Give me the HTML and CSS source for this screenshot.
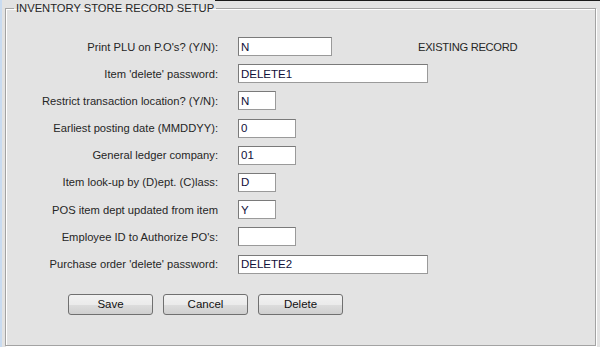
FILE: index.html
```html
<!DOCTYPE html>
<html lang="en">
<head>
  <meta charset="UTF-8" />
  <title>Inventory Store Record Setup</title>
  <link rel="stylesheet" href="styles.css">
</head>
<body>

  <div class="page">
    <fieldset class="setup">
      <legend>INVENTORY STORE RECORD SETUP</legend>

      <div class="rows">
        <div class="row">
          <label for="printPlu">Print PLU on P.O's? (Y/N):</label>
          <input type="text" id="printPlu" class="w94" value="N" />
          <span class="status">EXISTING RECORD</span>
        </div>
        <div class="row">
          <label for="itemPwd">Item 'delete' password:</label>
          <input type="text" id="itemPwd" class="w190" value="DELETE1" />
        </div>
        <div class="row">
          <label for="restrictLoc">Restrict transaction location? (Y/N):</label>
          <input type="text" id="restrictLoc" class="w38" value="N" />
        </div>
        <div class="row">
          <label for="postDate">Earliest posting date (MMDDYY):</label>
          <input type="text" id="postDate" class="w58" value="0" />
        </div>
        <div class="row">
          <label for="glCompany">General ledger company:</label>
          <input type="text" id="glCompany" class="w58" value="01" />
        </div>
        <div class="row">
          <label for="lookup">Item look-up by (D)ept. (C)lass:</label>
          <input type="text" id="lookup" class="w38" value="D" />
        </div>
        <div class="row">
          <label for="posDept">POS item dept updated from item</label>
          <input type="text" id="posDept" class="w38" value="Y" />
        </div>
        <div class="row">
          <label for="empId">Employee ID to Authorize PO's:</label>
          <input type="text" id="empId" class="w58" value="" />
        </div>
        <div class="row">
          <label for="poPwd">Purchase order 'delete' password:</label>
          <input type="text" id="poPwd" class="w190" value="DELETE2" />
        </div>
      </div>

      <div class="buttons">
        <button type="button">Save</button>
        <button type="button">Cancel</button>
        <button type="button">Delete</button>
      </div>
    </fieldset>
  </div>

</body>
</html>
```

FILE: styles.css
```css
html, body {
  height: 100%;
}

body {
  margin: 0;
  background: #e3e3e3;
  font-family: "Liberation Sans", Arial, sans-serif;
  font-size: 11.2px;
  color: #262626;
  border-left: 2px solid #c9dbf0;
  box-sizing: border-box;
}

.page {
  position: relative;
  padding: 1px 3px 0 3px;
}

/* dark window edge along the top right */
.page::before {
  content: "";
  position: absolute;
  top: 0;
  left: 213px;
  right: 0;
  height: 1px;
  background: #1a1a1a;
}

.setup {
  margin: 0;
  padding: 0 0 28px 0;
  height: 345px;
  box-sizing: border-box;
  border: 1px solid #a3a3a3;
  box-shadow: inset 1px 1px 0 #fff, 1px 1px 0 #fff;
  min-width: 0;
  width: 591px;
}

.setup legend {
  margin-left: 8px;
  padding: 0 2px;
  color: #262626;
  font-size: 11.2px;
  line-height: 14px;
}

.rows {
  display: flex;
  flex-direction: column;
  gap: 8.2px;
  padding-top: 22px;
}

.row {
  display: flex;
  align-items: center;
  gap: 20px;
  height: 19px;
}

.row label {
  width: 212px;
  text-align: right;
  white-space: nowrap;
}

.row input {
  height: 19px;
  box-sizing: border-box;
  margin: 0;
  padding: 0 2px;
  border: 1px solid #7a7a7a;
  border-right-color: #9a9a9a;
  border-bottom-color: #9a9a9a;
  background: #fff;
  font-family: "Liberation Sans", Arial, sans-serif;
  font-size: 11.5px;
  color: #10103a;
  outline: none;
}

.w38 { width: 38px; }
.w58 { width: 58px; }
.w94 { width: 94px; }
.w190 { width: 190px; }

.status {
  margin-left: 66px;
  color: #262626;
  letter-spacing: -0.3px;
}

.buttons {
  display: flex;
  gap: 10px;
  padding: 20px 0 0 62px;
}

.buttons button {
  width: 85px;
  height: 21px;
  margin: 0;
  padding: 0;
  border: 1px solid #707070;
  border-radius: 3px;
  background: linear-gradient(#f2f2f2, #ebebeb 50%, #dddddd 51%, #cfcfcf);
  font-family: "Liberation Sans", Arial, sans-serif;
  font-size: 11.5px;
  color: #111;
  cursor: pointer;
}
```
